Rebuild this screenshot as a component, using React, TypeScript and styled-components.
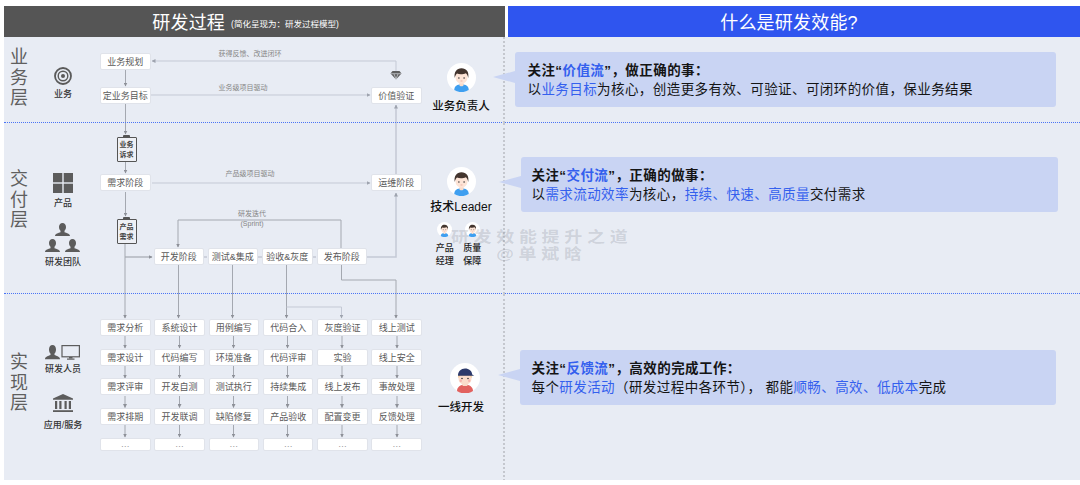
import React from "react";
import styled, { createGlobalStyle } from "styled-components";

const FONT = `"Liberation Sans", "Noto Sans CJK SC", sans-serif`;

const Global = createGlobalStyle`
  html, body { margin: 0; padding: 0; background: #fff; }
  body { font-family: ${FONT}; }
`;

const Page = styled.div`
  width: 1080px;
  height: 485px;
  padding: 6px 0 0 4px;
  box-sizing: border-box;
  overflow: hidden;
`;

const HeaderRow = styled.div`
  display: grid;
  grid-template-columns: 501px 1fr;
  column-gap: 3px;
  height: 31px;
`;

const Header = styled.div<{ $bg: string; $shift: number }>`
  background: ${(p) => p.$bg};
  color: #fff;
  display: flex;
  align-items: center;
  justify-content: center;
  padding-right: ${(p) => p.$shift}px;
  font-size: 18px;
  line-height: 31px;
  letter-spacing: 0.2px;
`;

const HeaderNote = styled.span`
  font-size: 8.5px;
  letter-spacing: 0;
  margin-left: 6px;
  margin-top: 3px;
`;

const Body = styled.div`
  position: relative;
  background: #e8ecf4;
  height: 443px;
  overflow: hidden;
`;

const Connectors = styled.svg`
  position: absolute;
  left: 0;
  top: 0;
  z-index: 0;
`;

const LayerRow = styled.section<{ $h: number; $last?: boolean }>`
  position: relative;
  z-index: 1;
  height: ${(p) => p.$h}px;
  box-sizing: border-box;
  display: grid;
  grid-template-columns: 31px 56px 334px 72px 8px 1fr;
  border-bottom: ${(p) => (p.$last ? "none" : "1px dotted #4a74f5")};
`;

const LayerTitle = styled.div<{ $top: number }>`
  padding-top: ${(p) => p.$top}px;
  width: 30px;
  text-align: center;
  font-size: 18px;
  line-height: 20.5px;
  color: #5f5f5f;
`;

const ActorColumn = styled.div<{ $top: number }>`
  padding-top: ${(p) => p.$top}px;
  display: flex;
  flex-direction: column;
  align-items: center;
`;

const Actor = styled.div<{ $gap: number; $mt?: number }>`
  display: flex;
  flex-direction: column;
  align-items: center;
  row-gap: ${(p) => p.$gap}px;
  margin-top: ${(p) => p.$mt ?? 0}px;
  svg { display: block; }
`;

const ActorLabel = styled.div`
  font-size: 9px;
  line-height: 12px;
  font-weight: 500;
  color: #333;
  white-space: nowrap;
`;

const Diagram = styled.div`
  position: relative;
  margin-left: 9px;
  width: 325px;
`;

const Node = styled.div<{ $x: number; $y: number }>`
  position: absolute;
  left: ${(p) => p.$x}px;
  top: ${(p) => p.$y}px;
  width: 50.5px;
  height: 17px;
`;

const NodeFace = styled.div<{ $muted?: boolean }>`
  width: 100%;
  height: 100%;
  box-sizing: border-box;
  background: #fff;
  border: 1px solid #e0e3ea;
  border-radius: 2px;
  display: flex;
  align-items: center;
  justify-content: center;
  font-size: 9px;
  color: ${(p) => (p.$muted ? "#999" : "#5a5a5a")};
  white-space: nowrap;
`;

const Clipboard = styled.div<{ $y: number }>`
  position: absolute;
  left: 16.5px;
  top: ${(p) => p.$y}px;
  width: 20px;
  height: 25px;
  box-sizing: border-box;
  border: 1.5px solid #555;
  border-radius: 1px;
  background: #eef0f5;
  color: #444;
  font-size: 7px;
  font-weight: 700;
  line-height: 10px;
  text-align: center;
  padding-top: 1.5px;
  &::before {
    content: "";
    position: absolute;
    left: 5px;
    top: -3px;
    width: 7px;
    height: 2px;
    background: #555;
    border-radius: 1px 1px 0 0;
  }
`;

const FlowLabel = styled.div<{ $x: number; $y: number }>`
  position: absolute;
  left: ${(p) => p.$x}px;
  top: ${(p) => p.$y}px;
  transform: translateX(-50%);
  font-size: 7px;
  line-height: 10px;
  color: #858585;
  white-space: nowrap;
  text-align: center;
`;

const WorkGrid = styled.div`
  display: grid;
  grid-template-columns: repeat(6, 50.5px);
  grid-template-rows: repeat(4, 17px) 13px;
  column-gap: 3.8px;
  row-gap: 12.7px;
  padding-top: 25px;
`;

const PersonaColumn = styled.div<{ $top: number }>`
  padding-top: ${(p) => p.$top}px;
  display: flex;
  flex-direction: column;
  align-items: center;
  svg { display: block; }
`;

const PersonaName = styled.div<{ $mt: number; $size: number }>`
  margin-top: ${(p) => p.$mt}px;
  font-size: ${(p) => p.$size}px;
  line-height: 16px;
  font-weight: 500;
  color: #111;
  white-space: nowrap;
`;

const AvatarShift = styled.div<{ $x: number }>`
  margin-left: ${(p) => p.$x}px;
`;

const RolePair = styled.div`
  display: grid;
  grid-template-columns: 18px 18px;
  column-gap: 9.5px;
  justify-items: center;
  margin-top: 7px;
  margin-left: -5px;
`;

const Role = styled.div`
  display: flex;
  flex-direction: column;
  align-items: center;
  row-gap: 5px;
`;

const RoleName = styled.div`
  font-size: 9px;
  line-height: 12.5px;
  font-weight: 500;
  color: #222;
  text-align: center;
`;

const Explain = styled.div`
  border-left: 2px dotted #c4c7ce;
  margin-left: -2px;
  margin-bottom: -1px;
`;

const Callout = styled.div<{ $top: number; $left: number; $w: number; $pad: number }>`
  position: relative;
  margin-top: ${(p) => p.$top}px;
  margin-left: ${(p) => p.$left}px;
  width: ${(p) => p.$w}px;
  height: 55px;
  box-sizing: border-box;
  background: #c9d4f3;
  border-radius: 3px;
  padding: 9px 0 0 ${(p) => p.$pad}px;
  font-size: 13.5px;
  letter-spacing: 0.42px;
  line-height: 19px;
  color: #151515;
  &::before {
    content: "";
    position: absolute;
    left: -22px;
    top: 19px;
    width: 22px;
    height: 12px;
    background: #c9d4f3;
    clip-path: polygon(0 50%, 100% 0, 100% 100%);
  }
`;

const CalloutTitle = styled.div`
  font-weight: 700;
`;

const Hi = styled.span`
  color: #3460ee;
`;

const Watermark = styled.div`
  position: absolute;
  z-index: 2;
  left: 461.5px;
  top: 190.5px;
  width: 151px;
  text-align: center;
  font-size: 15px;
  line-height: 17px;
  font-weight: 700;
  letter-spacing: 3.9px;
  color: rgba(120, 124, 135, 0.24);
  white-space: nowrap;
  pointer-events: none;
  transform: scaleX(1.2);
`;

const Avatar = ({ size, worker }: { size: number; worker?: boolean }) => (
  <svg width={size} height={size} viewBox="0 0 30 30">
    <circle cx="15" cy="15" r="15" fill="#fff" />
    {worker ? (
      <>
        <path d="M7 28c0-4 3.5-6.5 8-6.5s8 2.500 8 6.500a15 15 0 0 1-16 0z" fill="#e2625f" />
        <rect x="12.600" y="18" width="4.800" height="5" fill="#f9d9c6" />
        <path d="M8.500 12h13v3.500c0 3.800-3 6.200-6.500 6.200s-6.500-2.400-6.500-6.200z" fill="#fbdccb" />
        <path d="M8.500 12v3l1.500-2.500h10l1.500 2.500v-3z" fill="#eebb73" />
        <path d="M8 12.500c0-4 3-7 7-7s7 2.500 7.200 6l2 1.200H8z" fill="#2d3a6b" />
        <circle cx="12" cy="15.500" r=".8" fill="#333" />
        <circle cx="18" cy="15.500" r=".8" fill="#333" />
        <circle cx="10.800" cy="17.800" r="1.200" fill="#f6b3ad" />
        <circle cx="19.200" cy="17.800" r="1.200" fill="#f6b3ad" />
      </>
    ) : (
      <>
        <path d="M7.500 28c0-3.800 3-6 7.500-6s7.500 2.200 7.500 6a15 15 0 0 1-15 0z" fill="#3f9ff0" />
        <path d="M12.800 19h4.400v3.500c0 1-1 1.600-2.200 1.600s-2.200-.6-2.200-1.600z" fill="#f9dccb" />
        <ellipse cx="15" cy="14.500" rx="6.300" ry="7" fill="#fde4d6" />
        <path d="M8 15.500C7 9.500 10 5.500 15 5.500s8 3.500 7 10c-.5-2-1.200-3.800-2.600-4.800-2.500 1.200-6.800 1.400-9 .2C9.200 12 8.500 13.500 8 15.500z" fill="#43352e" />
        <circle cx="12.300" cy="15.500" r=".8" fill="#333" />
        <circle cx="17.700" cy="15.500" r=".8" fill="#333" />
        <path d="M14 18.600h2" stroke="#e79a90" strokeWidth=".7" />
      </>
    )}
  </svg>
);

const TargetIcon = () => (
  <svg width="18" height="18" viewBox="0 0 18 18" fill="none" stroke="#5a5a5a">
    <circle cx="9" cy="9" r="8" strokeWidth="1.800" />
    <circle cx="9" cy="9" r="4.800" strokeWidth="1.400" />
    <circle cx="9" cy="9" r="2" fill="#5a5a5a" stroke="none" />
  </svg>
);

const GridIcon = () => (
  <svg width="20" height="20" viewBox="0 0 20 20" fill="#5c5c5c">
    <rect width="9.300" height="9.300" />
    <rect x="10.700" width="9.300" height="9.300" />
    <rect y="10.700" width="9.300" height="9.300" />
    <rect x="10.700" y="10.700" width="9.300" height="9.300" />
  </svg>
);

const PERSON =
  "M7.500 0C9.700 0 11 1.800 11 4c0 1.600-.7 3-1.500 3.800v1.400c2 .8 5.500 1.300 5.500 3.800H0c0-2.500 3.500-3 5.500-3.800V7.800C4.700 7 4 5.600 4 4 4 1.800 5.300 0 7.500 0z";

const TeamIcon = () => (
  <svg width="35" height="29" viewBox="0 0 35 29" fill="#5c5c5c">
    <path d={PERSON} transform="translate(10 0)" />
    <path d={PERSON} transform="translate(0 16)" />
    <path d={PERSON} transform="translate(20 16)" />
  </svg>
);

const DevIcon = () => (
  <svg width="35" height="15" viewBox="0 0 35 15">
    <path d={PERSON} transform="translate(0 0) scale(1 1.1)" fill="#5c5c5c" />
    <rect x="17" y=".6" width="17.400" height="11.200" fill="none" stroke="#5c5c5c" strokeWidth="1.200" />
    <rect x="24" y="12" width="3.500" height="1.500" fill="#5c5c5c" />
    <rect x="22" y="13.500" width="7.500" height="1.200" fill="#5c5c5c" />
  </svg>
);

const BankIcon = () => (
  <svg width="20" height="18" viewBox="0 0 20 18" fill="#5c5c5c">
    <path d="M10 0l10 4.500v1.200H0V4.500z" />
    <rect x="2" y="7" width="2.200" height="8" />
    <rect x="6.300" y="7" width="2.200" height="8" />
    <rect x="11.500" y="7" width="2.200" height="8" />
    <rect x="15.800" y="7" width="2.200" height="8" />
    <rect y="16.200" width="20" height="1.800" />
  </svg>
);

const LIGHT = "#c4c9d5";
const DARK = "#a4a8b0";

type Line = { p: string; c: string; w?: number; head?: boolean };

const GRID_X = [125, 179.5, 233.5, 287.5, 342, 397];
const GRID_GAPS: [number, number][] = [
  [336, 348],
  [366, 378],
  [396, 407.500],
  [425, 437],
];

const LINES: Line[] = [
  { p: "396,72 396,61 152,61", c: LIGHT, head: true },
  { p: "151,95 370,95", c: LIGHT, head: true },
  { p: "396,174 396,105", c: LIGHT, w: 1.500, head: true },
  { p: "152,183 370,183", c: LIGHT, head: true },
  { p: "367,257 396,257 396,193", c: LIGHT, w: 1.500, head: true },
  { p: "125.500,70 125.500,86", c: DARK, head: true },
  { p: "125.500,104 125.500,134", c: DARK, head: true },
  { p: "125.500,162 125.500,173", c: DARK, head: true },
  { p: "125.500,192 125.500,216", c: DARK, head: true },
  { p: "125,244 125,318", c: DARK, head: true },
  { p: "125,257 152,257", c: DARK, w: 1.200, head: true },
  { p: "341,248 341,220 178,220 178,247", c: DARK, head: true },
  { p: "178.500,265 178.500,318", c: DARK, head: true },
  { p: "232.500,265 232.500,318", c: DARK, head: true },
  { p: "286.500,265 286.500,318", c: DARK, head: true },
  { p: "286.500,307 341.500,307 341.500,318", c: LIGHT, head: true },
  { p: "341.500,265 341.500,280 396,280 396,318", c: DARK, head: true },
  { p: "204,257 207,257", c: LIGHT, w: 1.500 },
  { p: "258,257 262,257", c: LIGHT, w: 1.500 },
  { p: "312,257 316,257", c: LIGHT, w: 1.500 },
  ...GRID_X.flatMap((x) =>
    GRID_GAPS.map(([a, b]) => ({ p: `${x},${a} ${x},${b}`, c: DARK, head: true }))
  ),
];

const ArrowDefs = () => (
  <defs>
    {[
      ["light", LIGHT],
      ["dark", DARK],
    ].map(([id, color]) => (
      <marker
        key={id}
        id={id}
        viewBox="0 0 4 4"
        refX="3.500"
        refY="2"
        markerWidth="4"
        markerHeight="4"
        markerUnits="userSpaceOnUse"
        orient="auto"
      >
        <path d="M0 0L4 2L0 4z" fill={color === LIGHT ? "#9ea3ae" : "#8d9098"} />
      </marker>
    ))}
  </defs>
);

const ConnectorLayer = () => (
  <Connectors width="1076" height="443" viewBox="4 37 1076 443" fill="none">
    <ArrowDefs />
    {LINES.map((l, i) => (
      <polyline
        key={i}
        points={l.p}
        stroke={l.c}
        strokeWidth={l.w ?? 1}
        markerEnd={l.head ? `url(#${l.c === LIGHT ? "light" : "dark"})` : undefined}
      />
    ))}
    <path d="M392.500 71h7l2 2.500-5.500 6-5.500-6z" fill="#5f5f5f" />
    <path d="M390.800 73.700h10.400M394 74l2 5 2-5" stroke="#e8ecf4" strokeWidth=".6" />
  </Connectors>
);

const WORK = [
  ["需求分析", "系统设计", "用例编写", "代码合入", "灰度验证", "线上测试"],
  ["需求设计", "代码编写", "环境准备", "代码评审", "实验", "线上安全"],
  ["需求评审", "开发自测", "测试执行", "持续集成", "线上发布", "事故处理"],
  ["需求排期", "开发联调", "缺陷修复", "产品验收", "配置变更", "反馈处理"],
  ["…", "…", "…", "…", "…", "…"],
];

const STAGE_NODES: [string, number, number][] = [
  ["需求阶段", 0, 51],
  ["运维阶段", 271, 51],
  ["开发阶段", 53.500, 125],
  ["测试&集成", 107.600, 125],
  ["验收&灰度", 162, 125],
  ["发布阶段", 216.500, 125],
];

const BUSINESS_NODES: [string, number, number][] = [
  ["业务规划", 0, 16],
  ["定业务目标", 0, 50],
  ["价值验证", 271, 50],
];

const DiagramNode = ({ n }: { n: [string, number, number] }) => (
  <Node $x={n[1]} $y={n[2]}>
    <NodeFace>{n[0]}</NodeFace>
  </Node>
);

export default function App() {
  return (
    <Page>
      <Global />
      <HeaderRow>
        <Header $bg="#555555" $shift={18}>
          研发过程<HeaderNote>(简化呈现为：研发过程模型)</HeaderNote>
        </Header>
        <Header $bg="#2f55ef" $shift={10}>什么是研发效能?</Header>
      </HeaderRow>
      <Body>
        <ConnectorLayer />

        <LayerRow $h={86}>
          <LayerTitle $top={10}>业<br />务<br />层</LayerTitle>
          <ActorColumn $top={30}>
            <Actor $gap={3}>
              <TargetIcon />
              <ActorLabel>业务</ActorLabel>
            </Actor>
          </ActorColumn>
          <Diagram>
            {BUSINESS_NODES.map((n) => (
              <DiagramNode key={n[0]} n={n} />
            ))}
            <FlowLabel $x={150} $y={12}>获得反馈、改进闭环</FlowLabel>
            <FlowLabel $x={143} $y={46}>业务级项目驱动</FlowLabel>
          </Diagram>
          <PersonaColumn $top={26}>
            <Avatar size={29} />
            <PersonaName $mt={6} $size={11.500}>业务负责人</PersonaName>
          </PersonaColumn>
          <span />
          <Explain>
            <Callout $top={15} $left={10} $w={541} $pad={12.500}>
              <CalloutTitle>关注“<Hi>价值流</Hi>”，做正确的事：</CalloutTitle>
              以<Hi>业务目标</Hi>为核心，创造更多有效、可验证、可闭环的价值，保业务结果
            </Callout>
          </Explain>
        </LayerRow>

        <LayerRow $h={171}>
          <LayerTitle $top={46}>交<br />付<br />层</LayerTitle>
          <ActorColumn $top={50}>
            <Actor $gap={4}>
              <GridIcon />
              <ActorLabel>产品</ActorLabel>
            </Actor>
            <Actor $gap={4} $mt={14}>
              <TeamIcon />
              <ActorLabel>研发团队</ActorLabel>
            </Actor>
          </ActorColumn>
          <Diagram>
            {STAGE_NODES.map((n) => (
              <DiagramNode key={n[0]} n={n} />
            ))}
            <Clipboard $y={14}>业务<br />诉求</Clipboard>
            <Clipboard $y={96}>产品<br />需求</Clipboard>
            <FlowLabel $x={150} $y={46}>产品级项目驱动</FlowLabel>
            <FlowLabel $x={152} $y={86}>研发迭代<br />(Sprint)</FlowLabel>
          </Diagram>
          <PersonaColumn $top={44}>
            <Avatar size={29} />
            <PersonaName $mt={3} $size={12}>技术Leader</PersonaName>
            <RolePair>
              <Role>
                <Avatar size={15} />
                <RoleName>产品<br />经理</RoleName>
              </Role>
              <Role>
                <Avatar size={15} />
                <RoleName>质量<br />保障</RoleName>
              </Role>
            </RolePair>
          </PersonaColumn>
          <span />
          <Explain>
            <Callout $top={34} $left={16} $w={537} $pad={10.500}>
              <CalloutTitle>关注“<Hi>交付流</Hi>”，正确的做事：</CalloutTitle>
              以<Hi>需求流动效率</Hi>为核心，<Hi>持续、快速、高质量</Hi>交付需求
            </Callout>
          </Explain>
        </LayerRow>

        <LayerRow $h={186} $last>
          <LayerTitle $top={58}>实<br />现<br />层</LayerTitle>
          <ActorColumn $top={51}>
            <Actor $gap={3}>
              <DevIcon />
              <ActorLabel>研发人员</ActorLabel>
            </Actor>
            <Actor $gap={7} $mt={19}>
              <BankIcon />
              <ActorLabel>应用/服务</ActorLabel>
            </Actor>
          </ActorColumn>
          <Diagram>
            <WorkGrid>
              {WORK.flat().map((t, i) => (
                <NodeFace key={i} $muted={t === "…"}>{t}</NodeFace>
              ))}
            </WorkGrid>
          </Diagram>
          <PersonaColumn $top={69}>
            <AvatarShift $x={7}>
              <Avatar size={30} worker />
            </AvatarShift>
            <PersonaName $mt={6} $size={11.500}>一线开发</PersonaName>
          </PersonaColumn>
          <span />
          <Explain>
            <Callout $top={56} $left={15} $w={536} $pad={11.500}>
              <CalloutTitle>关注“<Hi>反馈流</Hi>”，高效的完成工作：</CalloutTitle>
              每个<Hi>研发活动</Hi>（研发过程中各环节），&nbsp;都能<Hi>顺畅、高效、低成本</Hi>完成
            </Callout>
          </Explain>
        </LayerRow>

        <Watermark>
          研发效能提升之道
          <br />
          @单斌晗
        </Watermark>
      </Body>
    </Page>
  );
}
